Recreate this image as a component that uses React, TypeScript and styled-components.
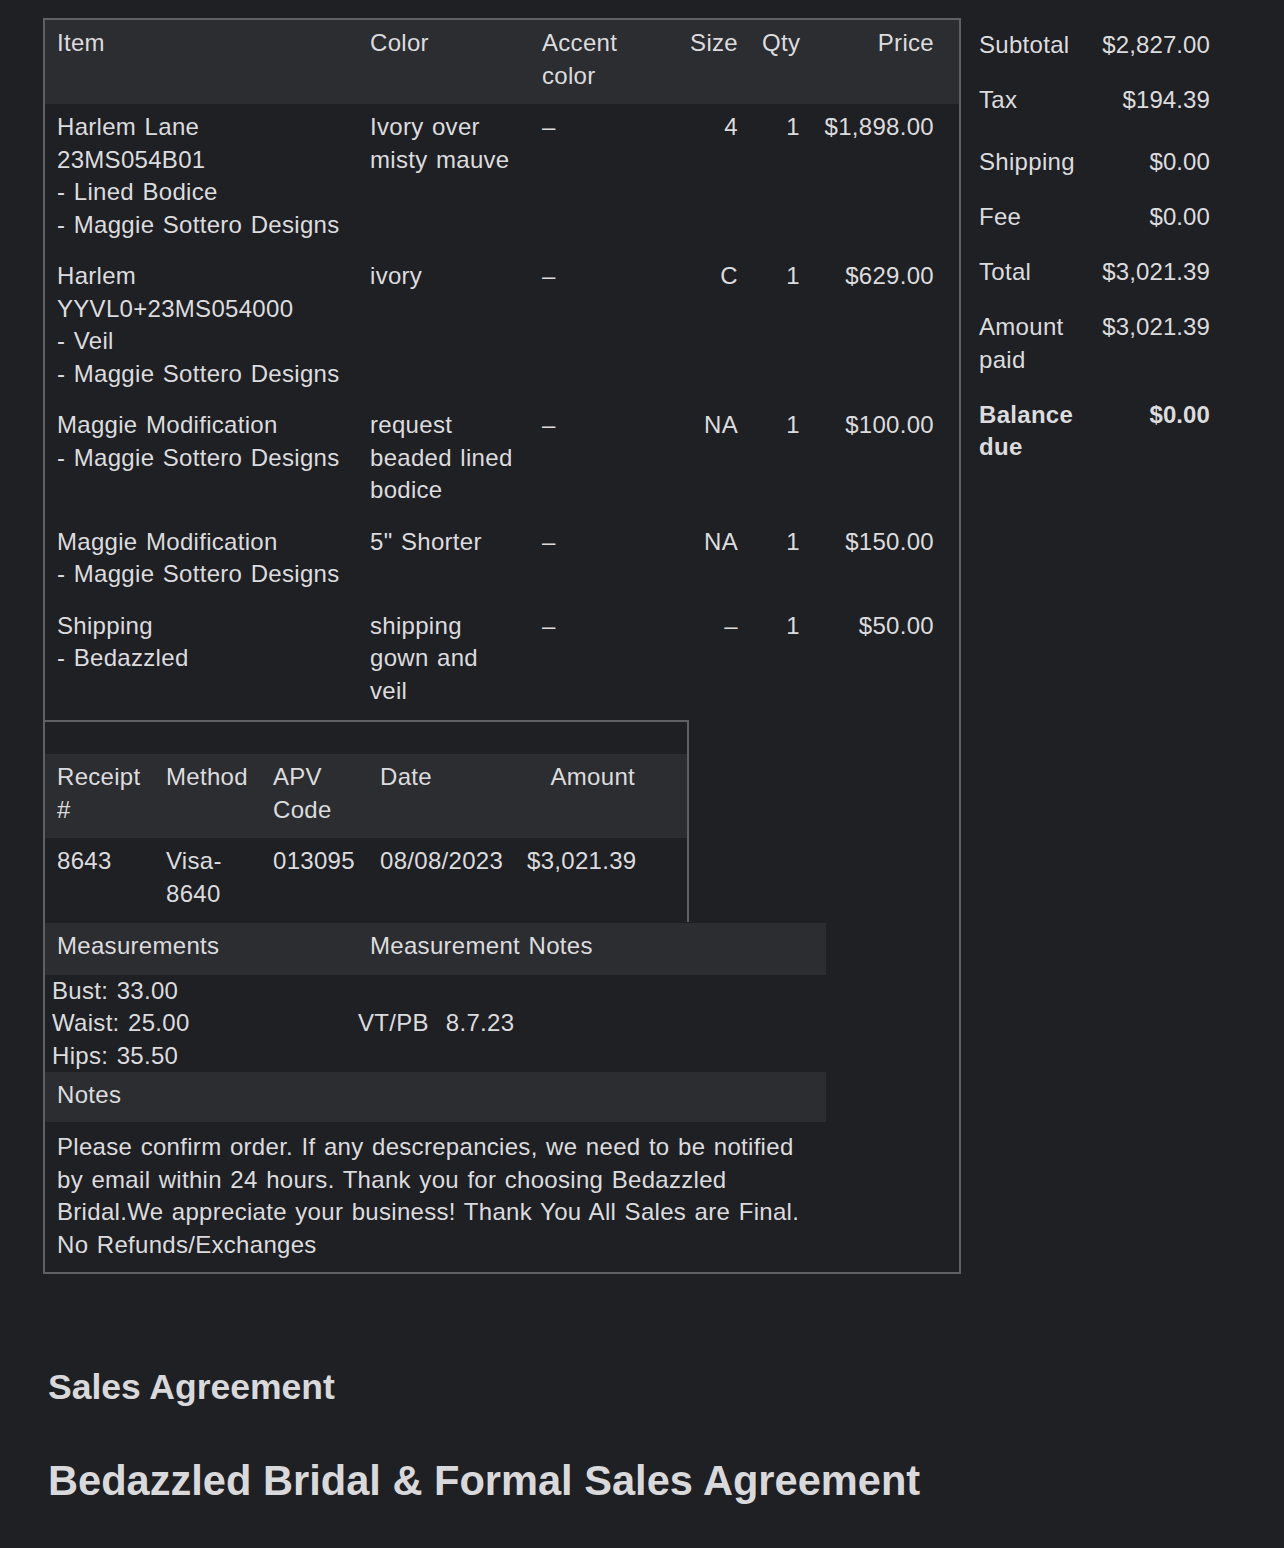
import React from "react";
import styled, { createGlobalStyle } from "styled-components";

const GlobalStyle = createGlobalStyle`
  body {
    margin: 0;
    background-color: #1f2024;
    color: #dcdcde;
    font-family: "Liberation Sans", Arial, Helvetica, sans-serif;
  }
`;

const Page = styled.div`
  padding: 18px 0 40px 43px;
  min-height: 1548px;
  box-sizing: border-box;
  font-size: 24px;
  line-height: 32.5px;
  letter-spacing: 0.3px;
  word-spacing: 1.5px;
`;

const TopRow = styled.div`
  display: flex;
  align-items: flex-start;
  gap: 6px;
`;

const InvoiceBox = styled.div`
  width: 918px;
  box-sizing: border-box;
  border: 2px solid #5f6064;
  padding-bottom: 11px;
`;

const ItemsGrid = styled.div`
  display: grid;
  grid-template-columns: 313px 172px 147px 73px 62px 147px;
`;

const HeadCell = styled.div<{ $align?: "left" | "right"; $last?: boolean }>`
  background-color: #2c2d31;
  padding: 7px ${(p) => (p.$last ? "25px" : "12px")} 12px 12px;
  text-align: ${(p) => p.$align ?? "left"};
`;

const Cell = styled.div<{ $align?: "left" | "right"; $last?: boolean }>`
  padding: 7px ${(p) => (p.$last ? "25px" : "12px")} 12px 12px;
  text-align: ${(p) => p.$align ?? "left"};
`;

const Line = styled.div`
  white-space: nowrap;
`;

const ReceiptTable = styled.div`
  margin-top: 1px;
  width: 644px;
  box-sizing: border-box;
  border-top: 2px solid #5f6064;
  border-right: 2px solid #5f6064;
`;

const Spacer = styled.div`
  height: 32px;
`;

const ReceiptGrid = styled.div`
  display: grid;
  grid-template-columns: 109px 107px 107px 147px 132px 40px;
`;

const Section = styled.div`
  width: 781px;
  margin-top: 1px;
`;

const MeasureGrid = styled.div`
  display: grid;
  grid-template-columns: 313px 468px;
`;

const MeasureData = styled.div<{ $pad: number }>`
  padding-left: ${(p) => p.$pad}px;
  display: flex;
  flex-direction: column;
  justify-content: center;
  white-space: pre;
`;

const NotesHead = styled.div`
  background-color: #2c2d31;
  padding: 7px 12px 10.5px;
`;

const NotesText = styled.div`
  padding: 9px 12px 0;
`;

const Summary = styled.div`
  display: grid;
  grid-template-columns: 123px 132px;
  margin-top: 2.5px;
`;

const SumLabel = styled.div<{ $bold?: boolean; $extra?: number }>`
  padding: ${(p) => 8.5 + (p.$extra ?? 0)}px 0 14px 12px;
  font-weight: ${(p) => (p.$bold ? 700 : 400)};
`;

const SumValue = styled.div<{ $bold?: boolean; $extra?: number }>`
  padding: ${(p) => 8.5 + (p.$extra ?? 0)}px 12px 14px 0;
  text-align: right;
  font-weight: ${(p) => (p.$bold ? 700 : 400)};
  letter-spacing: 0.1px;
`;

const SubHeading = styled.h2`
  margin: 92px 0 0 5px;
  font-size: 35.5px;
  line-height: 42px;
  font-weight: 700;
  letter-spacing: 0;
  word-spacing: 0;
  color: #d9d9db;
`;

const MainHeading = styled.h1`
  margin: 48px 0 0 5px;
  font-size: 41.6px;
  line-height: 50px;
  font-weight: 700;
  letter-spacing: 0;
  word-spacing: 0;
  color: #d9d9db;
`;

const items = [
  {
    name: ["Harlem Lane", "23MS054B01", "- Lined Bodice", "- Maggie Sottero Designs"],
    color: ["Ivory over", "misty mauve"],
    size: "4",
    price: "$1,898.00",
  },
  {
    name: ["Harlem", "YYVL0+23MS054000", "- Veil", "- Maggie Sottero Designs"],
    color: ["ivory"],
    size: "C",
    price: "$629.00",
  },
  {
    name: ["Maggie Modification", "- Maggie Sottero Designs"],
    color: ["request", "beaded lined", "bodice"],
    size: "NA",
    price: "$100.00",
  },
  {
    name: ["Maggie Modification", "- Maggie Sottero Designs"],
    color: ['5" Shorter'],
    size: "NA",
    price: "$150.00",
  },
  {
    name: ["Shipping", "- Bedazzled"],
    color: ["shipping", "gown and", "veil"],
    size: "–",
    price: "$50.00",
  },
];

const totals = [
  { label: ["Subtotal"], value: "$2,827.00" },
  { label: ["Tax"], value: "$194.39" },
  { label: ["Shipping"], value: "$0.00", extra: 7 },
  { label: ["Fee"], value: "$0.00" },
  { label: ["Total"], value: "$3,021.39" },
  { label: ["Amount", "paid"], value: "$3,021.39" },
  { label: ["Balance", "due"], value: "$0.00", bold: true },
];

const notes = [
  "Please confirm order. If any descrepancies, we need to be notified",
  "by email within 24 hours. Thank you for choosing Bedazzled",
  "Bridal.We appreciate your business! Thank You All Sales are Final.",
  "No Refunds/Exchanges",
];

function Lines({ lines }: { lines: string[] }) {
  return (
    <>
      {lines.map((l, i) => (
        <Line key={i}>{l}</Line>
      ))}
    </>
  );
}

export default function App() {
  return (
    <Page>
      <GlobalStyle />
      <TopRow>
        <InvoiceBox>
          <ItemsGrid>
            <HeadCell>Item</HeadCell>
            <HeadCell>Color</HeadCell>
            <HeadCell>
              <Lines lines={["Accent", "color"]} />
            </HeadCell>
            <HeadCell $align="right">Size</HeadCell>
            <HeadCell $align="right">Qty</HeadCell>
            <HeadCell $align="right" $last>
              Price
            </HeadCell>
            {items.map((it, i) => (
              <React.Fragment key={i}>
                <Cell>
                  <Lines lines={it.name} />
                </Cell>
                <Cell>
                  <Lines lines={it.color} />
                </Cell>
                <Cell>–</Cell>
                <Cell $align="right">{it.size}</Cell>
                <Cell $align="right">1</Cell>
                <Cell $align="right" $last>
                  {it.price}
                </Cell>
              </React.Fragment>
            ))}
          </ItemsGrid>

          <ReceiptTable>
            <Spacer />
            <ReceiptGrid>
              <HeadCell>
                <Lines lines={["Receipt", "#"]} />
              </HeadCell>
              <HeadCell>Method</HeadCell>
              <HeadCell>
                <Lines lines={["APV", "Code"]} />
              </HeadCell>
              <HeadCell>Date</HeadCell>
              <HeadCell $align="right">Amount</HeadCell>
              <HeadCell />
              <Cell>8643</Cell>
              <Cell>
                <Lines lines={["Visa-", "8640"]} />
              </Cell>
              <Cell>013095</Cell>
              <Cell>08/08/2023</Cell>
              <Cell $align="right">$3,021.39</Cell>
              <Cell />
            </ReceiptGrid>
          </ReceiptTable>

          <Section>
            <MeasureGrid>
              <HeadCell>Measurements</HeadCell>
              <HeadCell>Measurement Notes</HeadCell>
              <MeasureData $pad={7}>
                <Lines lines={["Bust: 33.00", "Waist: 25.00", "Hips: 35.50"]} />
              </MeasureData>
              <MeasureData $pad={0}>{"VT/PB  8.7.23"}</MeasureData>
            </MeasureGrid>
            <NotesHead>Notes</NotesHead>
            <NotesText>
              <Lines lines={notes} />
            </NotesText>
          </Section>
        </InvoiceBox>

        <Summary>
          {totals.map((t, i) => (
            <React.Fragment key={i}>
              <SumLabel $bold={t.bold} $extra={t.extra}>
                <Lines lines={t.label} />
              </SumLabel>
              <SumValue $bold={t.bold} $extra={t.extra}>
                {t.value}
              </SumValue>
            </React.Fragment>
          ))}
        </Summary>
      </TopRow>

      <SubHeading>Sales Agreement</SubHeading>
      <MainHeading>Bedazzled Bridal &amp; Formal Sales Agreement</MainHeading>
    </Page>
  );
}
